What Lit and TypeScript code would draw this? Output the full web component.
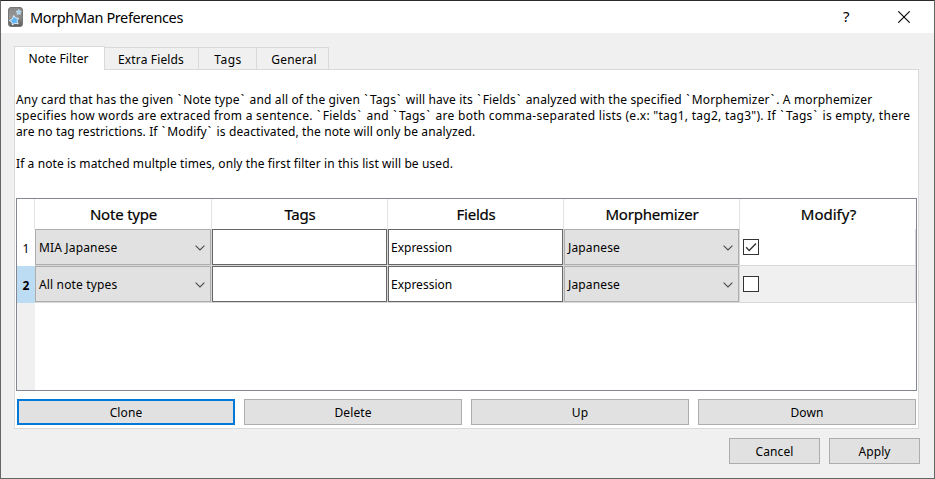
import { LitElement, html, css, svg } from "lit";

const INTRO: { text: string; spacing: number }[] = [
  { text: "Any card that has the given `Note type` and all of the given `Tags` will have its `Fields` analyzed with the specified `Morphemizer`. A morphemizer", spacing: 0.148 },
  { text: "specifies how words are extraced from a sentence. `Fields` and `Tags` are both comma-separated lists (e.x: \"tag1, tag2, tag3\"). If `Tags` is empty, there", spacing: 0.263 },
  { text: "are no tag restrictions. If `Modify` is deactivated, the note will only be analyzed.", spacing: 0.115 },
  { text: "", spacing: 0 },
  { text: "If a note is matched multple times, only the first filter in this list will be used.", spacing: 0.1 },
];

const TABS = ["Note Filter", "Extra Fields", "Tags", "General"];
const COLUMNS = ["Note type", "Tags", "Fields", "Morphemizer", "Modify?"];
const ROWS = [
  { noteType: "MIA Japanese", tags: "", fields: "Expression", morphemizer: "Japanese", modify: true },
  { noteType: "All note types", tags: "", fields: "Expression", morphemizer: "Japanese", modify: false },
];

class PrefCombo extends LitElement {
  static properties = { value: {} };
  declare value: string;
  static styles = css`
    :host {
      display: flex; align-items: center; justify-content: space-between;
      box-sizing: border-box; height: 36px; margin-right: 1px; padding: 0 5px 0 3px;
      border: 1px solid #adadad; background: #e1e1e1; letter-spacing: 0.15px;
    }
    svg { display: block; }
  `;
  render() {
    return html`<span>${this.value}</span>
      <svg width="10" height="6" viewBox="0 0 10 6" fill="none" stroke="#4a4a4a" stroke-width="1.1">
        <path d="M0.6 0.6 L5 5 L9.4 0.6" />
      </svg>`;
  }
}
customElements.define("pref-combo", PrefCombo);

class AppRoot extends LitElement {
  static styles = css`
    :host {
      display: flex; flex-direction: column; box-sizing: border-box;
      width: 935px; height: 479px; overflow: hidden;
      border: 1px solid #666; border-top-color: #2b2a2d;
      background: #f0f0f0; color: #000;
      font: 12px/16px "Noto Sans", "Open Sans", sans-serif;
    }
    .titlebar { display: flex; align-items: center; height: 32px; background: #fff; padding: 0 24px 0 6px; flex: none; }
    .logo { display: block; margin-top: -1px; }
    .title { margin-left: 6px; font-size: 14.5px; letter-spacing: -0.38px; flex: 1; }
    .help { font-size: 15px; margin: -2px 47px 0 0; width: 8px; }
    .close { display: block; }
    .body { flex: 1; display: flex; flex-direction: column; padding: 13px 15px 0 13px; }
    .tabs { display: flex; align-items: flex-end; height: 23px; z-index: 1; }
    .tab {
      box-sizing: border-box; height: 22px; border: 1px solid #d9d9d9; border-left: 0; border-bottom: 0;
      display: flex; align-items: center; justify-content: center; letter-spacing: 0.15px; padding-top: 2px;
    }
    .tab:nth-child(1) { width: 91px; height: 24px; margin-bottom: -1px; border-left: 1px solid #d9d9d9; background: #fff; padding: 0 2px 0 0; letter-spacing: 0.1px; }
    .tab:nth-child(2) { width: 94px; padding-right: 1px; }
    .tab:nth-child(3) { width: 58px; letter-spacing: 0.5px; padding-left: 1px; }
    .tab:nth-child(4) { width: 72px; padding-left: 3px; }
    .pane {
      box-sizing: border-box; width: 905px; height: 360px; border: 1px solid #d9d9d9; background: #fff;
      padding: 22px 1px 0; display: flex; flex-direction: column;
    }
    .intro { height: 106px; flex: none; white-space: pre; }
    .line { height: 16px; }
    .tick { display: inline-block; margin: 0 2px 0 1px; }
    .table {
      box-sizing: border-box; width: 901px; height: 193px; border: 1px solid #828790; flex: none;
      display: grid; grid-template-columns: 18px 177px 176px 176px 176px 176px;
      grid-template-rows: 30px 37px 37px 1fr;
    }
    .head {
      box-sizing: border-box; border-right: 1px solid #e3e3e3; font-size: 15px; letter-spacing: -0.2px;
      display: flex; align-items: center; justify-content: center; padding: 0 0 1px 1px;
      -webkit-text-stroke: 0.2px #000;
    }
    .head.last { border-right: 0; letter-spacing: 0; }
    .num { display: flex; align-items: center; justify-content: center; padding-top: 2px; }
    .num.current { background: #bcdcf4; font-weight: 700; }
    .cell { border-bottom: 1px solid #d8d8d8; border-right: 1px solid #d8d8d8; box-sizing: border-box; }
    .cell.control { border-right: 0; background: #d8d8d8; }
    .cell.modify { display: flex; align-items: center; padding-left: 3px; }
    .cell.shaded { background: #f0f0f0; }
    .input {
      box-sizing: border-box; height: 36px; margin-right: 1px; border: 1px solid #666; background: #fff;
      display: flex; align-items: center; padding-left: 2px;
    }
    .input, pref-combo { padding-top: 1px; }
    .check { box-sizing: border-box; width: 16px; height: 16px; border: 1px solid #333; background: #fff; }
    .check svg { display: block; }
    .gutter { background: #f0f0f0; }
    .actions { display: grid; grid-template-columns: repeat(4, 218px); column-gap: 9px; padding: 8px 0 0 1px; }
    .button {
      box-sizing: border-box; height: 26px; border: 1px solid #adadad; background: #e1e1e1;
      display: flex; align-items: center; justify-content: center; padding-top: 1px; letter-spacing: 0.1px;
    }
    .button.focus { border: 2px solid #0078d7; }
    .footer { display: flex; justify-content: flex-end; gap: 9px; padding-top: 9px; margin-right: -1px; }
    .footer .button { width: 91px; }
  `;

  private line(text: string, spacing: number) {
    const parts = text.split("`");
    return html`<div class="line" style="letter-spacing:${spacing}px">${parts.map((p, i) => (i ? html`<span class="tick">&#96;</span>${p}` : p))}</div>`;
  }

  private logo() {
    return svg`
      <defs><linearGradient id="g" x1="0" y1="0" x2="0" y2="1">
        <stop offset="0" stop-color="#6a6a6a"/><stop offset="0.5" stop-color="#8c8c8c"/><stop offset="1" stop-color="#5c5c5c"/>
      </linearGradient></defs>
      <rect x="1.5" y="0.5" width="14" height="19" rx="2.5" fill="url(#g)" stroke="#777"/>
      <path d="M2 12 Q10 11 15 6 V3 Q15 1 13 1 H4 Q2 1 2 3Z" fill="#a0a0a0" opacity="0.55"/>
      <path d="M6.8 8.6 L8.6 11 L11.6 11.1 L10 13.9 L11.2 16.8 L7.9 16.3 L5.3 18 L5 15.2 L2.4 13.4 L5.4 12Z" fill="#5fb4f2" stroke="#e8f5ff" stroke-width="0.9"/>
      <path d="M11.6 2.4 L12.4 4 L14.2 4.2 L13.1 5.6 L13.5 7.4 L11.8 6.8 L10.2 7.6 L10.3 5.8 L9 4.6 L10.8 4.1Z" fill="#9cd2f8" stroke="#e8f5ff" stroke-width="0.5"/>`;
  }

  render() {
    return html`
      <div class="titlebar">
        <svg class="logo" width="17" height="20" viewBox="0 0 17 20">${this.logo()}</svg>
        <div class="title">MorphMan Preferences</div>
        <div class="help">?</div>
        <svg class="close" width="12" height="12" viewBox="0 0 12 12" stroke="#000" stroke-width="1.1"><path d="M0.3 0.3 L11.7 11.7 M11.7 0.3 L0.3 11.7" /></svg>
      </div>
      <div class="body">
        <div class="tabs">${TABS.map((t) => html`<div class="tab">${t}</div>`)}</div>
        <div class="pane">
          <div class="intro">${INTRO.map((l) => this.line(l.text, l.spacing))}</div>
          <div class="table">
            <div class="head"></div>
            ${COLUMNS.map((c, i) => html`<div class="head ${i === 4 ? "last" : ""}">${c}</div>`)}
            ${ROWS.map((r, i) => html`
              <div class="num ${i === 1 ? "current" : ""}">${i + 1}</div>
              <div class="cell control"><pref-combo .value=${r.noteType}></pref-combo></div>
              <div class="cell control"><div class="input">${r.tags}</div></div>
              <div class="cell control"><div class="input">${r.fields}</div></div>
              <div class="cell control"><pref-combo .value=${r.morphemizer}></pref-combo></div>
              <div class="cell modify ${i === 1 ? "shaded" : ""}">
                <div class="check">${r.modify
                  ? html`<svg width="14" height="14" viewBox="0 0 14 14" fill="none" stroke="#333" stroke-width="1.4"><path d="M2.2 7.3 L5.2 10.6 L12 3.6" /></svg>`
                  : ""}</div>
              </div>`)}
            <div class="gutter"></div>
          </div>
          <div class="actions">
            <div class="button focus">Clone</div>
            <div class="button">Delete</div>
            <div class="button">Up</div>
            <div class="button">Down</div>
          </div>
        </div>
        <div class="footer">
          <div class="button">Cancel</div>
          <div class="button">Apply</div>
        </div>
      </div>`;
  }
}
customElements.define("app-root", AppRoot);
